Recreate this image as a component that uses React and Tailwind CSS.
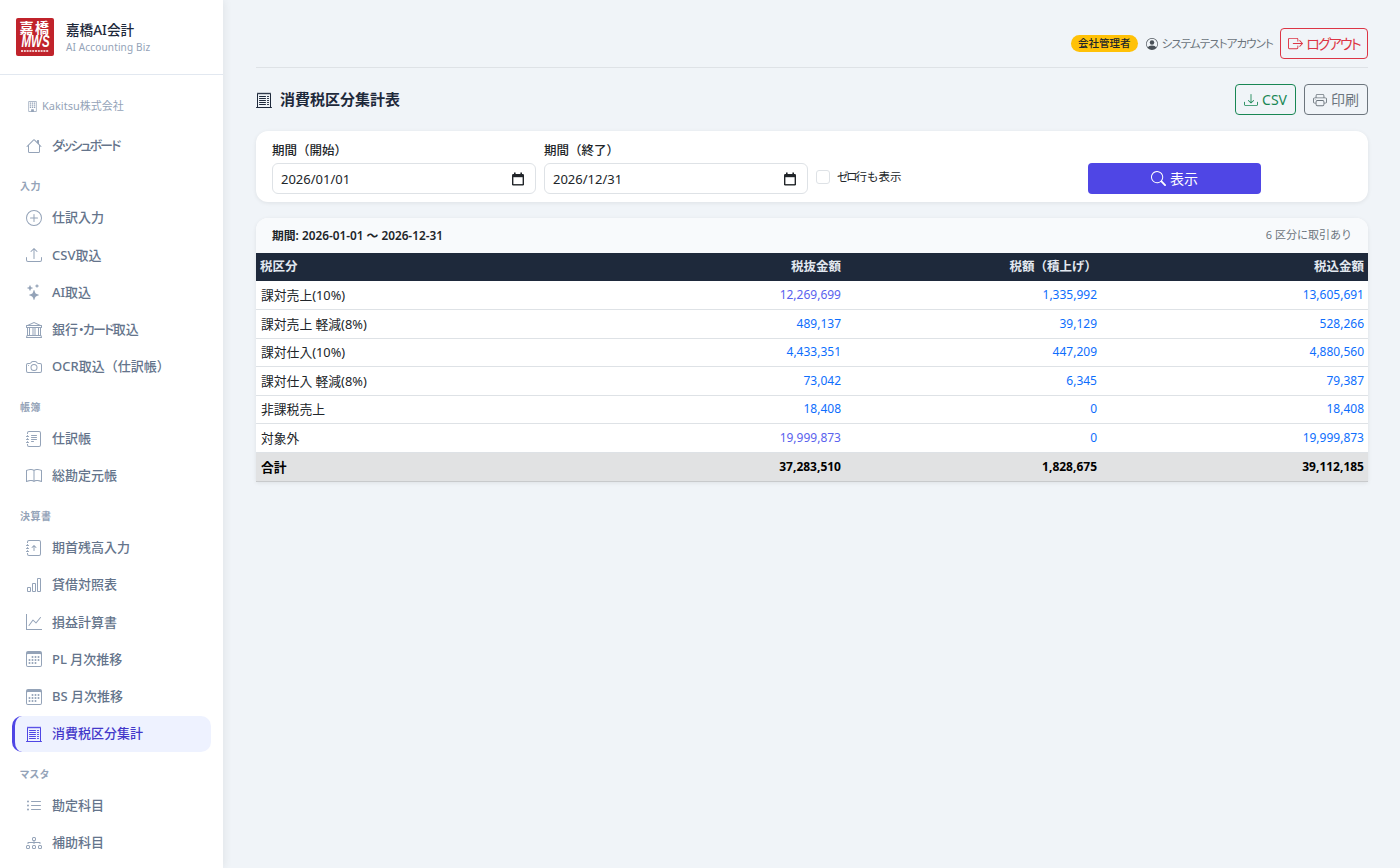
import React from "react";
import {
  BsBuilding, BsHouse, BsPlusCircle, BsUpload, BsStars, BsBank, BsCamera, BsJournalText, BsBook,
  BsJournalArrowUp, BsBarChart, BsGraphUp, BsCalendar3, BsReceiptCutoff, BsListUl, BsDiagram3,
  BsBoxArrowRight, BsDownload, BsPrinter, BsSearch, BsPersonCircle,
} from "react-icons/bs";

const Kana = ({ children, className = "" }) => (
  <span className={"[font-feature-settings:'palt'] " + className}>{children}</span>
);

const Item = ({ icon: I, label, active }) => (
  <div className={active
    ? "flex h-[36.14px] items-center gap-[10px] rounded-[10px] border-l-[3px] border-[#4f46e5] bg-[#eef2ff] pl-[11px] text-[13px] font-medium text-[#4338ca]"
    : "flex h-[36.14px] items-center gap-[10px] rounded-[10px] pl-[14px] text-[13px] font-medium text-[#64748b]"}>
    <I className={active ? "h-[16px] w-[16px] shrink-0 text-[#4f46e5]" : "h-[16px] w-[16px] shrink-0 text-[#94a3b8]"} />
    <span>{label}</span>
  </div>
);

const Section = ({ title }) => (
  <div className="mb-[4px] mt-[12px] h-[20px] px-[8px] text-[10px] font-semibold leading-[20px] tracking-[0.5px] text-[#94a3b8]">{title}</div>
);

const rows = [
  ["課対売上(10%)", "12,269,699", "1,335,992", "13,605,691", "text-[#5a62ee]"],
  ["課対売上 軽減(8%)", "489,137", "39,129", "528,266", "text-[#0d6efd]"],
  ["課対仕入(10%)", "4,433,351", "447,209", "4,880,560", "text-[#0d6efd]"],
  ["課対仕入 軽減(8%)", "73,042", "6,345", "79,387", "text-[#0d6efd]"],
  ["非課税売上", "18,408", "0", "18,408", "text-[#0d6efd]"],
  ["対象外", "19,999,873", "0", "19,999,873", "text-[#5a62ee]"],
];

const CalendarGlyph = () => (
  <svg width="14" height="14" viewBox="0 0 14 14" className="shrink-0">
    <rect x="3" y="0.5" width="1.6" height="2.5" fill="#212529" />
    <rect x="9.4" y="0.5" width="1.6" height="2.5" fill="#212529" />
    <rect x="1" y="2" width="12" height="11.5" rx="1.2" fill="#212529" />
    <rect x="2.4" y="5.2" width="9.2" height="6.9" fill="#fff" />
  </svg>
);

const DateBox = ({ value }) => (
  <div className="flex h-[31px] w-[264px] items-center justify-between rounded-[6px] border border-[#dee2e6] bg-white pl-[8px] pr-[10px] text-[13px] text-[#212529]">
    <span className="pt-[2px]">{value}</span>
    <CalendarGlyph />
  </div>
);

const Logo = () => (
  <svg width="38" height="38" viewBox="0 0 38 38" className="shrink-0">
    <rect width="38" height="38" rx="2" fill="#c0232b" />
    <text x="19" y="14.5" textAnchor="middle" fontSize="14" fontWeight="700" letterSpacing="1.5" fill="#fff" fontFamily="'Noto Sans CJK JP', sans-serif">嘉橋</text>
    <text transform="translate(5.5 29) scale(1 1.45)" fontSize="11.5" fontWeight="700" fontStyle="italic" fill="#fff" fontFamily="'Liberation Sans', sans-serif">MWS</text>
    <line x1="5" y1="33" x2="33" y2="33" stroke="#fff" strokeOpacity="0.75" strokeWidth="2" strokeDasharray="2 0.8" />
  </svg>
);

export default function App() {
  return (
    <div className="flex h-[868px] w-[1400px] overflow-hidden bg-[#f0f4f8] text-[#212529] [font-family:'Noto_Sans','Noto_Sans_CJK_JP',sans-serif]">
      <aside className="relative z-10 flex w-[223px] shrink-0 flex-col overflow-hidden bg-white shadow-[2px_0_8px_rgba(0,0,0,0.06)]">
        <div className="flex h-[75px] shrink-0 items-center gap-[12px] border-b border-[#e2e8f0] pl-[16px]">
          <Logo />
          <div>
            <div className="text-[13.6px] font-medium leading-[20px] text-[#1e293b]">嘉橋AI会計</div>
            <div className="text-[10px] leading-[14px] tracking-[0.15px] text-[#94a3b8]">AI Accounting Biz</div>
          </div>
        </div>
        <div className="flex shrink-0 flex-col px-[12px]">
          <div className="mt-[21px] flex h-[20px] items-center gap-[4px] pl-[15px] text-[11px] text-[#94a3b8]">
            <BsBuilding className="h-[11px] w-[11px]" />
            <span>Kakitsu株式会社</span>
          </div>
          <div className="mt-[12px]"><Item icon={BsHouse} label={<Kana className="tracking-[-1.9px]">ダッシュボード</Kana>} /></div>
          <Section title="入力" />
          <div className="flex flex-col gap-px">
            <Item icon={BsPlusCircle} label="仕訳入力" />
            <Item icon={BsUpload} label="CSV取込" />
            <Item icon={BsStars} label="AI取込" />
            <Item icon={BsBank} label={<>銀行<Kana className="tracking-[-1.75px]">・カード</Kana>取込</>} />
            <Item icon={BsCamera} label="OCR取込（仕訳帳）" />
          </div>
          <Section title="帳簿" />
          <div className="flex flex-col gap-px">
            <Item icon={BsJournalText} label="仕訳帳" />
            <Item icon={BsBook} label="総勘定元帳" />
          </div>
          <Section title="決算書" />
          <div className="flex flex-col gap-px">
            <Item icon={BsJournalArrowUp} label="期首残高入力" />
            <Item icon={BsBarChart} label="貸借対照表" />
            <Item icon={BsGraphUp} label="損益計算書" />
            <Item icon={BsCalendar3} label="PL 月次推移" />
            <Item icon={BsCalendar3} label="BS 月次推移" />
            <Item icon={BsReceiptCutoff} label="消費税区分集計" active />
          </div>
          <Section title={<Kana>マスタ</Kana>} />
          <div className="flex flex-col gap-px">
            <Item icon={BsListUl} label="勘定科目" />
            <Item icon={BsDiagram3} label="補助科目" />
          </div>
        </div>
      </aside>
      <main className="flex min-w-0 flex-1 flex-col pl-[33px] pr-[32px] pt-[28px]">
        <div className="flex h-[40px] items-start justify-end border-b border-[#dee2e6]">
          <span className="mt-[7px] flex h-[17px] items-center whitespace-nowrap rounded-full bg-[#ffc107] px-[7px] text-[10.5px] font-medium text-[#212529]">会社管理者</span>
          <span className="ml-[8px] mt-[6px] flex h-[19px] items-center gap-[4px] whitespace-nowrap text-[11.5px] text-[#6c757d]">
            <BsPersonCircle className="h-[12px] w-[12px] text-[#495057]" /><Kana className="tracking-[-0.9px]">システムテストアカウント</Kana>
          </span>
          <span className="ml-[7px] flex h-[31px] w-[88px] items-center justify-center gap-[3px] whitespace-nowrap rounded-[4px] border border-[#dc3545] text-[14px] text-[#dc3545]">
            <BsBoxArrowRight className="h-[15px] w-[15px]" /><Kana className="tracking-[-1.8px]">ログアウト</Kana>
          </span>
        </div>
        <div className="mt-[16px] flex h-[31px] items-center justify-between">
          <div className="flex items-center gap-[8px] text-[15px] font-semibold text-[#1e293b]">
            <BsReceiptCutoff className="h-[16px] w-[16px]" />消費税区分集計表
          </div>
          <div className="flex gap-[8px]">
            <span className="flex h-[31px] w-[61px] items-center justify-center gap-[4px] rounded-[4px] border border-[#198754] text-[14px] text-[#198754]">
              <BsDownload className="h-[14px] w-[14px]" />CSV
            </span>
            <span className="flex h-[31px] w-[64px] items-center justify-center gap-[4px] rounded-[4px] border border-[#6c757d] text-[14px] text-[#6c757d]">
              <BsPrinter className="h-[14px] w-[14px]" />印刷
            </span>
          </div>
        </div>
        <div className="mt-[16px] flex h-[71px] items-start rounded-[12px] bg-white pl-[16px] pt-[10px] shadow-[0_1px_4px_rgba(0,0,0,0.08)]">
          <div className="mr-[8px]">
            <div className="h-[22px] text-[12.5px] font-medium leading-[20px]">期間（開始）</div>
            <DateBox value="2026/01/01" />
          </div>
          <div className="mr-[8px]">
            <div className="h-[22px] text-[12.5px] font-medium leading-[20px]">期間（終了）</div>
            <DateBox value="2026/12/31" />
          </div>
          <div className="mt-[27px] flex w-[272px] items-center gap-[7px] text-[11.5px]">
            <span className="h-[14px] w-[14px] rounded-[3px] border border-[#dee2e6] bg-white"></span>
            <span><Kana className="tracking-[-2px]">ゼロ</Kana>行も表示</span>
          </div>
          <div className="mt-[22px] flex h-[31px] w-[173px] items-center justify-center gap-[4px] rounded-[4px] bg-[#4f46e5] text-[14px] text-white">
            <BsSearch className="h-[15px] w-[15px]" />表示
          </div>
        </div>
        <div className="mt-[16px] rounded-t-[12px] bg-white shadow-[0_1px_4px_rgba(0,0,0,0.08)]">
          <div className="flex h-[35px] items-center justify-between rounded-t-[12px] bg-[#f8fafc] px-[16px] text-[11px]">
            <span className="text-[11.8px] font-semibold leading-[35px] text-[#212529]">期間: 2026-01-01 〜 2026-12-31</span>
            <span className="text-[#6c757d]">6 区分に取引あり</span>
          </div>
          <table className="w-full border-collapse text-[12px]">
            <thead>
              <tr className="h-[28px] bg-[#1e293b] text-[12.5px] font-semibold text-[#e2e8f0]">
                <th className="w-[337px] px-[4px] text-left font-semibold">税区分</th>
                <th className="w-[252px] px-[4px] text-right font-semibold">税抜金額</th>
                <th className="w-[256px] px-[4px] text-right font-semibold">税額（積上げ）</th>
                <th className="px-[4px] text-right font-semibold">税込金額</th>
              </tr>
            </thead>
            <tbody>
              {rows.map((r) => (
                <tr key={r[0]} className="h-[28.5px] border-b border-[#dee2e6]">
                  <td className="px-[5px] pt-[1px] text-[12.8px] text-[#212529]">{r[0]}</td>
                  <td className={"px-[4px] text-right " + r[4]}>{r[1]}</td>
                  <td className="px-[4px] text-right text-[#0d6efd]">{r[2]}</td>
                  <td className="px-[4px] text-right text-[#0d6efd]">{r[3]}</td>
                </tr>
              ))}
              <tr className="h-[29.5px] border-b border-[#c8cacc] bg-[#e1e2e3] font-bold text-black">
                <td className="px-[5px] pt-[1px] text-[12.8px]">合計</td>
                <td className="px-[4px] text-right">37,283,510</td>
                <td className="px-[4px] text-right">1,828,675</td>
                <td className="px-[4px] text-right">39,112,185</td>
              </tr>
            </tbody>
          </table>
        </div>
      </main>
    </div>
  );
}
